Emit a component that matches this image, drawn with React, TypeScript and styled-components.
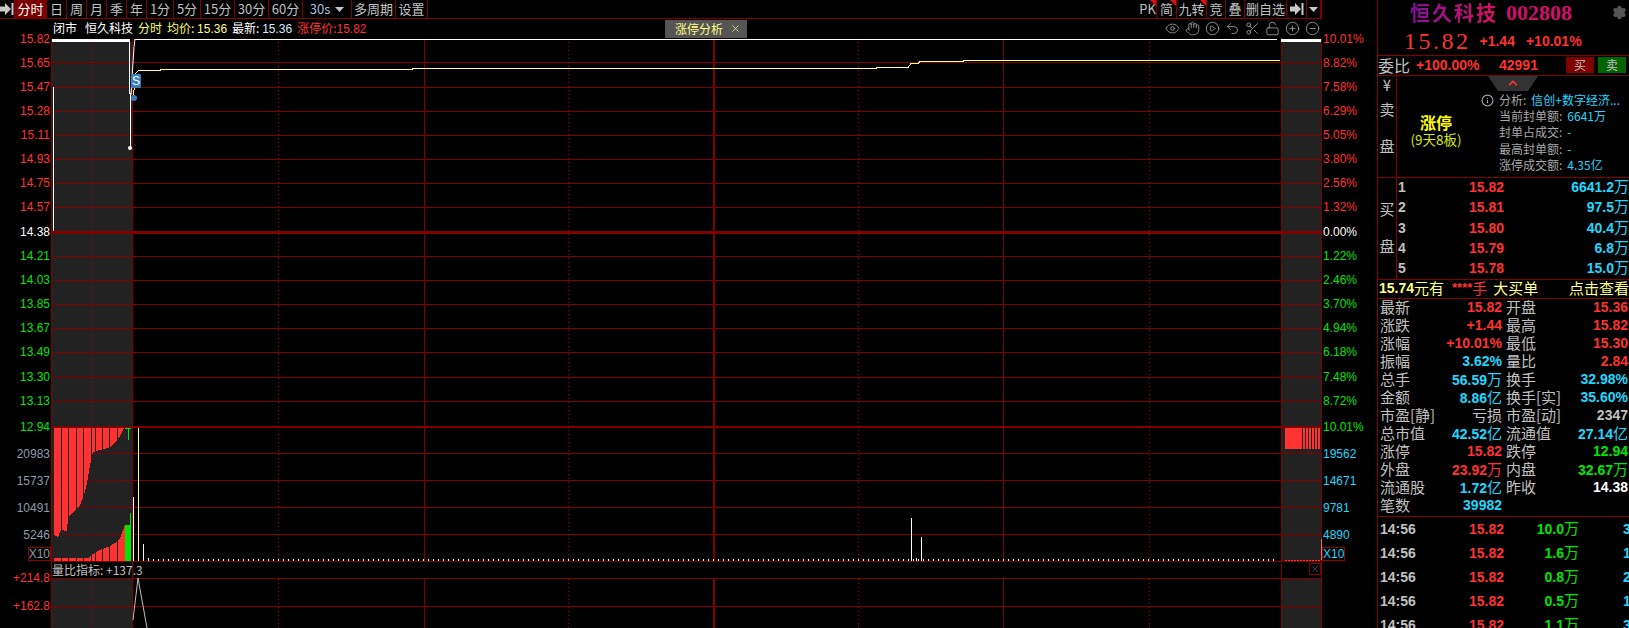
import React from 'react';
import styled, { createGlobalStyle } from 'styled-components';
import { Eye, Hand, CirclePlay, Undo2, Scissors, LockOpen, CirclePlus, CircleMinus, Settings, Info, ChevronUp, X } from 'lucide-react';

const SANS = '"Liberation Sans", "Noto Sans CJK SC", sans-serif';
const CJK = '"Noto Sans CJK SC", "Liberation Sans", sans-serif';
const LINE = '#800000';
const RED = '#ff3232';
const GREEN = '#00e600';
const CYAN = '#1ed8ff';
const GRAY = '#c0c0c0';

const GlobalStyle = createGlobalStyle`
  html, body {
    margin: 0;
    padding: 0;
    background: #000;
    overflow: hidden;
  }
`;

const Page = styled.div`
  display: flex;
  width: 1629px;
  height: 628px;
  overflow: hidden;
  background: #000;
  font-family: ${SANS};
`;

const Main = styled.div`
  width: 1377px;
  flex-shrink: 0;
  display: flex;
  flex-direction: column;
`;

const Toolbar = styled.div`
  display: flex;
  width: 1322px;
  height: 19px;
  flex-shrink: 0;
  box-sizing: border-box;
  border-bottom: 1px solid ${LINE};
  border-right: 1px solid ${LINE};
`;

const ToolCell = styled.div<{ $w: number; $active?: boolean; $flag?: boolean; $color?: string }>`
  position: relative;
  width: ${(p) => p.$w}px;
  box-sizing: border-box;
  display: flex;
  align-items: center;
  justify-content: center;
  gap: 5px;
  border-right: 1px solid ${LINE};
  background: ${(p) => (p.$active ? '#7a0000' : 'transparent')};
  color: ${(p) => (p.$active ? '#fff' : p.$color || GRAY)};
  font: 13px/18px ${CJK};
  white-space: nowrap;
  ${(p) =>
    p.$flag &&
    `&::after {
      content: '';
      position: absolute;
      top: 0;
      right: 0;
      border-top: 6px solid #e01010;
      border-left: 6px solid transparent;
    }`}
`;

const ToolSpacer = styled.div`
  flex: 1;
`;

const ChartBody = styled.div`
  flex: 1;
  display: flex;
  min-height: 0;
`;

const AxisColumn = styled.div<{ $side: 'left' | 'right' }>`
  width: ${(p) => (p.$side === 'left' ? 51 : 55)}px;
  flex-shrink: 0;
  box-sizing: border-box;
  display: flex;
  flex-direction: column;
  align-items: ${(p) => (p.$side === 'left' ? 'flex-end' : 'flex-start')};
  padding-top: 14px;
  padding-right: ${(p) => (p.$side === 'left' ? 1 : 0)}px;
  padding-left: ${(p) => (p.$side === 'left' ? 0 : 1)}px;
  font-size: 12px;
  line-height: 12px;
`;

const AxisTick = styled.div<{ $gap: number; $color: string; $boxed?: boolean }>`
  height: 12px;
  flex-shrink: 0;
  margin-top: ${(p) => p.$gap}px;
  color: ${(p) => p.$color};
  white-space: nowrap;
  ${(p) => p.$boxed && `outline: 1px solid #900000; background: #000;`}
`;

const Center = styled.div`
  width: 1271px;
  flex-shrink: 0;
  display: flex;
  flex-direction: column;
`;

const InfoRow = styled.div`
  height: 19px;
  flex-shrink: 0;
  display: flex;
  align-items: center;
`;

const InfoLeft = styled.div`
  width: 614px;
  box-sizing: border-box;
  padding-left: 2px;
  display: flex;
  gap: 5px;
  font: 12px/19px ${CJK};
  white-space: nowrap;
`;

const InfoText = styled.span<{ $color: string; $wide?: boolean }>`
  color: ${(p) => p.$color};
  margin-right: ${(p) => (p.$wide ? 3 : 0)}px;
`;

const InfoNum = styled.span<{ $color: string }>`
  color: ${(p) => p.$color};
  font-family: ${SANS};
`;

const AnalysisTag = styled.div`
  width: 82px;
  height: 18px;
  box-sizing: border-box;
  padding: 0 6px 0 10px;
  background: #555;
  color: #ffff80;
  font: 12px/18px ${CJK};
  display: flex;
  align-items: center;
  justify-content: space-between;
`;

const ToolIcons = styled.div`
  margin-left: auto;
  margin-right: 2px;
  display: flex;
  gap: 5px;
  color: #9a9a9a;
`;

const PlotWrap = styled.div`
  position: relative;
  flex: 1;
  min-height: 0;
`;

const PlotSvg = styled.svg`
  display: block;
  width: 1271px;
  height: 590px;
`;

const IndicatorLabel = styled.div`
  position: absolute;
  left: 1px;
  top: 524px;
  height: 15px;
  color: ${GRAY};
  font: 12px/15px ${CJK};
  white-space: nowrap;
`;

const IndicatorClose = styled.div`
  position: absolute;
  right: 1px;
  top: 525px;
  width: 12px;
  height: 12px;
  box-sizing: border-box;
  border: 1px solid ${LINE};
  color: #999;
  display: flex;
  align-items: center;
  justify-content: center;
`;

const Side = styled.div`
  width: 252px;
  flex-shrink: 0;
  box-sizing: border-box;
  border-left: 1px solid ${LINE};
  display: flex;
  flex-direction: column;
  overflow: hidden;
`;

const TitleRow = styled.div`
  position: relative;
  height: 26px;
  flex-shrink: 0;
  box-sizing: border-box;
  padding-left: 32px;
  display: flex;
  align-items: center;
  gap: 8px;
`;

const TitleName = styled.span`
  font: 700 20px/24px ${CJK};
  letter-spacing: 2px;
  background: linear-gradient(90deg, #80109a, #e01060);
  -webkit-background-clip: text;
  background-clip: text;
  color: transparent;
`;

const TitleCode = styled.span`
  font: 700 22px/24px "Liberation Serif", serif;
  color: #d0106a;
`;

const GearSlot = styled.div`
  position: absolute;
  right: 2px;
  top: 5px;
  color: #555;
`;

const PriceRow = styled.div`
  height: 30px;
  flex-shrink: 0;
  box-sizing: border-box;
  padding-left: 26px;
  display: flex;
  align-items: center;
  color: ${RED};
  border-bottom: 1px solid ${LINE};
`;

const BigPrice = styled.span`
  font: 24px/26px "Liberation Serif", serif;
  letter-spacing: 2.5px;
  margin-right: 9px;
`;

const PriceDelta = styled.span`
  font: 700 14px/26px ${SANS};
  margin-right: 11px;
`;

const RatioRow = styled.div`
  height: 20px;
  flex-shrink: 0;
  box-sizing: border-box;
  padding-bottom: 1px;
  display: flex;
  align-items: center;
  border-bottom: 1px solid ${LINE};
  color: ${RED};
  font: 700 14px/18px ${SANS};
`;

const RatioLabel = styled.span`
  width: 38px;
  color: ${GRAY};
  font: 400 16px/18px ${CJK};
  white-space: nowrap;
`;

const RatioValue = styled.span`
  width: 83px;
`;

const TradeButton = styled.div<{ $bg: string }>`
  width: 28px;
  height: 16px;
  margin-left: 4px;
  background: ${(p) => p.$bg};
  color: ${GRAY};
  font: 400 12px/16px ${CJK};
  text-align: center;
`;

const RatioButtons = styled.div`
  display: flex;
  margin-left: auto;
  margin-right: 3px;
`;

const BookSection = styled.div<{ $h: number }>`
  position: relative;
  height: ${(p) => p.$h}px;
  flex-shrink: 0;
  box-sizing: border-box;
  display: flex;
  border-bottom: 1px solid ${LINE};
`;

const BookSideLabel = styled.div<{ $top: number; $gap: number }>`
  width: 19px;
  flex-shrink: 0;
  box-sizing: border-box;
  border-right: 1px solid ${LINE};
  padding-top: ${(p) => p.$top}px;
  display: flex;
  flex-direction: column;
  align-items: center;
  gap: ${(p) => p.$gap}px;
  color: ${GRAY};
  font: 15px/18px ${CJK};
`;

const BookSideGap = styled.div`
  height: 7px;
  flex-shrink: 0;
`;

const Notch = styled.div`
  position: absolute;
  left: 110px;
  top: 0;
  width: 50px;
  height: 15px;
  background: #333;
  clip-path: polygon(0 0, 100% 0, 80% 100%, 20% 100%);
  color: ${RED};
  display: flex;
  justify-content: center;
`;

const LimitBadge = styled.div`
  width: 78px;
  flex-shrink: 0;
  padding-top: 37px;
  text-align: center;
  white-space: nowrap;
`;

const LimitTitle = styled.div`
  color: #ffff00;
  font: 700 16px/18px ${CJK};
`;

const LimitSub = styled.div`
  color: #d8e800;
  font: 13.5px/16px ${CJK};
`;

const LimitList = styled.div`
  margin-left: 6px;
  padding-top: 16px;
  display: flex;
  flex-direction: column;
`;

const LimitRow = styled.div<{ $indent?: boolean }>`
  height: 16.2px;
  display: flex;
  align-items: center;
  gap: 5px;
  padding-left: ${(p) => (p.$indent ? 18 : 0)}px;
  color: #a8a8a8;
  font: 12px/16px ${CJK};
  white-space: nowrap;
`;

const LimitValue = styled.span`
  color: ${CYAN};
`;

const BookRows = styled.div`
  flex: 1;
  display: flex;
  flex-direction: column;
`;

const BookRow = styled.div`
  flex: 1;
  box-sizing: border-box;
  padding-bottom: 2px;
  display: grid;
  grid-template-columns: 20px 87px 1fr;
  align-items: center;
  font: 700 14px/18px ${SANS};
`;

const BookIndex = styled.span`
  color: ${GRAY};
  padding-left: 1px;
`;

const Cell = styled.span<{ $color: string }>`
  color: ${(p) => p.$color};
  text-align: right;
  white-space: nowrap;
`;

const Unit = styled.span`
  font: 400 15px/16px ${CJK};
`;

const AdRow = styled.div`
  height: 19px;
  flex-shrink: 0;
  box-sizing: border-box;
  padding-left: 1px;
  padding-bottom: 2px;
  display: flex;
  align-items: center;
  border-bottom: 1px solid ${LINE};
  color: #ffff80;
  font: 15px/16px ${CJK};
  white-space: nowrap;
`;

const AdPrice = styled.span`
  font: 700 14px/16px ${SANS};
`;

const AdStars = styled.span`
  margin-left: 8px;
  color: ${RED};
  font-weight: 700;
  font-family: ${SANS};
  font-size: 13px;
`;

const AdHint = styled.span`
  margin-left: auto;
`;

const AdWord = styled.span<{ $red?: boolean; $gap?: number }>`
  color: ${(p) => (p.$red ? RED : 'inherit')};
  margin-left: ${(p) => p.$gap || 0}px;
`;

const StatsGrid = styled.div`
  height: 218px;
  flex-shrink: 0;
  box-sizing: border-box;
  border-bottom: 1px solid ${LINE};
  display: grid;
  grid-template-columns: 124px 122px;
  grid-auto-rows: 18px;
  column-gap: 4px;
  align-content: start;
`;

const StatCell = styled.div`
  box-sizing: border-box;
  padding-bottom: 2px;
  display: flex;
  justify-content: space-between;
  align-items: center;
  white-space: nowrap;
  font: 700 14px/16px ${SANS};
`;

const StatLabel = styled.span`
  padding-left: 2px;
  color: ${GRAY};
  font: 400 15px/16px ${CJK};
`;

const StatSecondLabel = styled(StatLabel)`
  padding-left: 0;
`;

const TradeRow = styled.div`
  height: 24px;
  flex-shrink: 0;
  display: grid;
  grid-template-columns: 50px 76px 75px 44px 6px;
  align-items: center;
  font: 700 14px/24px ${SANS};
`;

const TradeTime = styled.span`
  color: ${GRAY};
  padding-left: 2px;
`;

const TradeTail = styled.span`
  color: ${CYAN};
`;

// 数字和单位分开渲染，单位用细字体
const Val = ({ text, color }: { text: string; color: string }) => {
  const m = text.match(/^(.*?)([万亿]?)$/);
  return (
    <Cell $color={color}>
      {m ? m[1] : text}
      {m && m[2] ? <Unit>{m[2]}</Unit> : null}
    </Cell>
  );
};

type Tick = { y: number; text: string; color: string; boxed?: boolean };

const P = '#ff3232';
const V = '#8f9ba8';

const leftTicks: Tick[] = [
  { y: 39, text: '15.82', color: P },
  { y: 62.5, text: '15.65', color: P },
  { y: 87, text: '15.47', color: P },
  { y: 111, text: '15.28', color: P },
  { y: 135, text: '15.11', color: P },
  { y: 159, text: '14.93', color: P },
  { y: 183, text: '14.75', color: P },
  { y: 207, text: '14.57', color: P },
  { y: 232, text: '14.38', color: '#fff' },
  { y: 256, text: '14.21', color: GREEN },
  { y: 280, text: '14.03', color: GREEN },
  { y: 304, text: '13.85', color: GREEN },
  { y: 328, text: '13.67', color: GREEN },
  { y: 352, text: '13.49', color: GREEN },
  { y: 377, text: '13.30', color: GREEN },
  { y: 401, text: '13.13', color: GREEN },
  { y: 427, text: '12.94', color: GREEN },
  { y: 453.5, text: '20983', color: V },
  { y: 480.5, text: '15737', color: V },
  { y: 507.5, text: '10491', color: V },
  { y: 534.5, text: '5246', color: V },
  { y: 553.5, text: 'X10', color: V, boxed: true },
  { y: 578, text: '+214.8', color: P },
  { y: 606, text: '+162.8', color: P },
];

const rightTicks: Tick[] = [
  { y: 39, text: '10.01%', color: P },
  { y: 62.5, text: '8.82%', color: P },
  { y: 87, text: '7.58%', color: P },
  { y: 111, text: '6.29%', color: P },
  { y: 135, text: '5.05%', color: P },
  { y: 159, text: '3.80%', color: P },
  { y: 183, text: '2.56%', color: P },
  { y: 207, text: '1.32%', color: P },
  { y: 232, text: '0.00%', color: '#fff' },
  { y: 256, text: '1.22%', color: GREEN },
  { y: 280, text: '2.46%', color: GREEN },
  { y: 304, text: '3.70%', color: GREEN },
  { y: 328, text: '4.94%', color: GREEN },
  { y: 352, text: '6.18%', color: GREEN },
  { y: 377, text: '7.48%', color: GREEN },
  { y: 401, text: '8.72%', color: GREEN },
  { y: 427, text: '10.01%', color: GREEN },
  { y: 453.5, text: '19562', color: CYAN },
  { y: 480.5, text: '14671', color: CYAN },
  { y: 507.5, text: '9781', color: CYAN },
  { y: 534.5, text: '4890', color: CYAN },
  { y: 553.5, text: 'X10', color: CYAN, boxed: true },
];

const AxisTicks = ({ ticks, side }: { ticks: Tick[]; side: 'left' | 'right' }) => (
  <AxisColumn $side={side}>
    {ticks.map((t, i) => (
      <AxisTick key={t.text + i} $color={t.color} $boxed={t.boxed} $gap={i === 0 ? 0 : t.y - ticks[i - 1].y - 12}>
        {t.text}
      </AxisTick>
    ))}
  </AxisColumn>
);

const gridY = [62.5, 87, 111, 135, 159, 183, 207, 256, 280, 304, 328, 352, 377, 401, 453.5, 480.5, 507.5, 534.5, 561.5, 578.5, 606.5];
const dotted = [91, 278, 568, 858, 1149];
const solid = [424, 1003];

const hang = '54,428 54,535 58,537 61,530 67,531 68,517 75,510 80,505 84,495 87,483 90,465 93,452 100,450 105,449 110,447 115,443 120,436 124,428';
const rise = '54,561 54,558 88,558 90,556 95,553 100,550 105,548 110,546 115,543 120,538 125,525 125,561';
const slits = [61, 68, 76, 83, 91, 95, 102, 109, 117];

const ticksX = Array.from({ length: 225 }, (_, i) => 153 + i * 5);
const rightStripes = Array.from({ length: 12 }, (_, i) => 1285 + i * 3);

const Plot = () => (
  <PlotSvg viewBox="51 38 1271 590">
    <g shapeRendering="crispEdges">
      <rect x="52" y="42" width="80" height="520" fill="#222" />
      <rect x="52" y="579" width="80" height="49" fill="#222" />
      <rect x="1281" y="42" width="41" height="520" fill="#222" />
      <rect x="1281" y="579" width="41" height="49" fill="#222" />
      {gridY.map((y) => (
        <line key={y} x1="51" x2="1322" y1={y} y2={y} stroke={LINE} />
      ))}
      <rect x="51" y="231" width="1271" height="3" fill={LINE} />
      <rect x="51" y="426" width="1271" height="2" fill={LINE} />
      {dotted.map((x) => (
        <g key={x}>
          <line x1={x + 0.5} x2={x + 0.5} y1="42" y2="561" stroke="#a00000" strokeDasharray="1 3" />
          <line x1={x + 0.5} x2={x + 0.5} y1="579" y2="628" stroke="#a00000" strokeDasharray="1 3" />
        </g>
      ))}
      {solid.map((x) => (
        <g key={x}>
          <line x1={x + 0.5} x2={x + 0.5} y1="39" y2="561" stroke={LINE} />
          <line x1={x + 0.5} x2={x + 0.5} y1="579" y2="628" stroke={LINE} />
        </g>
      ))}
      <rect x="713" y="39" width="2" height="522" fill={LINE} />
      <rect x="713" y="579" width="2" height="49" fill={LINE} />
      {[51, 131.5, 1280.5, 1321].map((x) => (
        <line key={x} x1={x + 0.5} x2={x + 0.5} y1="38" y2="628" stroke={LINE} />
      ))}

      <rect x="52" y="39" width="78" height="3" fill="#fff" />
      <rect x="1281" y="39" width="40" height="3" fill="#fff" />
      <rect x="135" y="39" width="1142" height="1" fill="#fff" />
      <rect x="53" y="87" width="1" height="144" fill="#fff" />
      <rect x="129" y="41" width="1" height="53" fill="#fff" />
      <rect x="130" y="93" width="1" height="55" fill="#fff" />
    </g>

    <circle cx="130" cy="148" r="2" fill="#fff" />
    <polyline points="131,95 133,62 134,47 135,39" fill="none" stroke="#fff" />
    <polyline
      points="133,96 135,85 136,73 138,71 140,70.5 160,70.5 160,69.5 412,69.5 412,68.5 876,68.5 876,67.5 908,67.5 911,63.5 918,63.5 920,61.5 963,61.5 963,60.5 1280,60.5"
      fill="none"
      stroke="#ffff80"
      shapeRendering="crispEdges"
    />
    <rect x="131" y="74" width="10" height="14" rx="1" fill="#3a7cc0" />
    <text x="132" y="85" fill="#fff" fontSize="12" fontFamily='"Liberation Sans", sans-serif'>
      S
    </text>
    <circle cx="134" cy="98" r="3" fill="#3a7cc0" />

    <g shapeRendering="crispEdges">
      <polygon points={hang} fill="#ff3232" />
      <polygon points={rise} fill="#ff3232" />
      {slits.map((x) => (
        <rect key={x} x={x} y="428" width="1" height="133" fill="#222" />
      ))}
      <rect x="125" y="525" width="5" height="36" fill="#00e600" />
      <rect x="130" y="513" width="1" height="48" fill="#00e600" />
      <rect x="125" y="428" width="6" height="1" fill="#00e600" />
      <rect x="128" y="428" width="1" height="12" fill="#00e600" />
      <rect x="133" y="497" width="1" height="64" fill="#fff" />
      <rect x="138" y="428" width="1" height="133" fill="#ffff80" />
      <rect x="143" y="544" width="1" height="17" fill="#ffff80" />
      <rect x="148" y="558" width="1" height="3" fill="#fff" />
      {ticksX.map((x) => (
        <rect key={x} x={x} y="559" width="1" height="2" fill="#fff" />
      ))}
      <rect x="911" y="518" width="1" height="43" fill="#fff" />
      <rect x="921" y="537" width="1" height="24" fill="#fff" />
      <rect x="916" y="558" width="1" height="3" fill="#fff" />
      {rightStripes.map((x, i) => (
        <rect key={x} x={x} y="428" width={i < 5 ? 3 : 2} height="21" fill="#ff3232" />
      ))}
      <line x1="1285" x2="1320" y1="560.5" y2="560.5" stroke="#ff3232" strokeDasharray="2 1" />
      <rect x="1321" y="539" width="1" height="21" fill="#ff6060" />
    </g>

    <polyline points="133,620 138,578 147,628" fill="none" stroke="#c0c0c0" />
  </PlotSvg>
);

const statRows: [string, string, string, string, string, string][] = [
  ['最新', '15.82', RED, '开盘', '15.36', RED],
  ['涨跌', '+1.44', RED, '最高', '15.82', RED],
  ['涨幅', '+10.01%', RED, '最低', '15.30', RED],
  ['振幅', '3.62%', CYAN, '量比', '2.84', RED],
  ['总手', '56.59万', CYAN, '换手', '32.98%', CYAN],
  ['金额', '8.86亿', CYAN, '换手[实]', '35.60%', CYAN],
  ['市盈[静]', '亏损', GRAY, '市盈[动]', '2347', GRAY],
  ['总市值', '42.52亿', CYAN, '流通值', '27.14亿', CYAN],
  ['涨停', '15.82', RED, '跌停', '12.94', GREEN],
  ['外盘', '23.92万', RED, '内盘', '32.67万', GREEN],
  ['流通股', '1.72亿', CYAN, '昨收', '14.38', '#fff'],
  ['笔数', '39982', CYAN, '', '', GRAY],
];

const bookRows = [
  ['1', '15.82', '6641.2万'],
  ['2', '15.81', '97.5万'],
  ['3', '15.80', '40.4万'],
  ['4', '15.79', '6.8万'],
  ['5', '15.78', '15.0万'],
];

const trades = [
  ['14:56', '15.82', '10.0万', '3'],
  ['14:56', '15.82', '1.6万', '1'],
  ['14:56', '15.82', '0.8万', '2'],
  ['14:56', '15.82', '0.5万', '1'],
  ['14:56', '15.82', '1.1万', '3'],
];

const leftTools: [string, number][] = [
  ['日', 20], ['周', 20], ['月', 20], ['季', 20], ['年', 20],
  ['1分', 27], ['5分', 27], ['15分', 34], ['30分', 34], ['60分', 34],
];

const ArrowEnd = () => (
  <svg width="14" height="12" viewBox="0 0 14 12">
    <path d="M0 3.5h5V0l6 6-6 6V8.5H0z M11.5 0h2v12h-2z" fill="#c8c8c8" />
  </svg>
);

const Caret = () => (
  <svg width="9" height="5" viewBox="0 0 9 5">
    <path d="M0 0h9L4.5 5z" fill="#c8c8c8" />
  </svg>
);

export default function App() {
  return (
    <Page>
      <GlobalStyle />
      <Main>
        <Toolbar>
          <ToolCell $w={15}>
            <ArrowEnd />
          </ToolCell>
          <ToolCell $w={32} $active>
            分时
          </ToolCell>
          {leftTools.map(([t, w]) => (
            <ToolCell key={t} $w={w}>
              {t}
            </ToolCell>
          ))}
          <ToolCell $w={49} $color="#a8c0d8">
            30s
            <Caret />
          </ToolCell>
          <ToolCell $w={44}>多周期</ToolCell>
          <ToolCell $w={32}>设置</ToolCell>
          <ToolSpacer />
          <ToolCell $w={18} $flag>
            PK
          </ToolCell>
          <ToolCell $w={20} $flag>
            简
          </ToolCell>
          <ToolCell $w={30} $flag>
            九转
          </ToolCell>
          <ToolCell $w={19}>竞</ToolCell>
          <ToolCell $w={19}>叠</ToolCell>
          <ToolCell $w={42}>删自选</ToolCell>
          <ToolCell $w={20}>
            <ArrowEnd />
          </ToolCell>
          <ToolCell $w={14}>
            <Caret />
          </ToolCell>
        </Toolbar>
        <ChartBody>
          <AxisTicks ticks={leftTicks} side="left" />
          <Center>
            <InfoRow>
              <InfoLeft>
                <InfoText $color="#fff" $wide>闭市</InfoText>
                <InfoText $color="#fff">恒久科技</InfoText>
                <InfoText $color="#ffff66">分时</InfoText>
                <InfoText $color="#ffff66">
                  均价: <InfoNum $color="#ffff80">15.36</InfoNum>
                </InfoText>
                <InfoText $color="#fff">
                  最新: <InfoNum $color="#d8ecff">15.36</InfoNum>
                </InfoText>
                <InfoText $color={RED}>
                  涨停价:<InfoNum $color={RED}>15.82</InfoNum>
                </InfoText>
              </InfoLeft>
              <AnalysisTag>
                涨停分析
                <X size={11} strokeWidth={1.5} />
              </AnalysisTag>
              <ToolIcons>
                <Eye size={15} strokeWidth={1.4} />
                <Hand size={15} strokeWidth={1.4} />
                <CirclePlay size={15} strokeWidth={1.4} />
                <Undo2 size={15} strokeWidth={1.4} />
                <Scissors size={15} strokeWidth={1.4} />
                <LockOpen size={15} strokeWidth={1.4} />
                <CirclePlus size={15} strokeWidth={1.4} />
                <CircleMinus size={15} strokeWidth={1.4} />
              </ToolIcons>
            </InfoRow>
            <PlotWrap>
              <Plot />
              <IndicatorLabel>量比指标: +137.3</IndicatorLabel>
              <IndicatorClose>
                <X size={10} strokeWidth={1} />
              </IndicatorClose>
            </PlotWrap>
          </Center>
          <AxisTicks ticks={rightTicks} side="right" />
        </ChartBody>
      </Main>
      <Side>
        <TitleRow>
          <TitleName>恒久科技</TitleName>
          <TitleCode>002808</TitleCode>
          <GearSlot>
            <Settings size={15} fill="#555" />
          </GearSlot>
        </TitleRow>
        <PriceRow>
          <BigPrice>15.82</BigPrice>
          <PriceDelta>+1.44</PriceDelta>
          <PriceDelta>+10.01%</PriceDelta>
        </PriceRow>
        <RatioRow>
          <RatioLabel>委比</RatioLabel>
          <RatioValue>+100.00%</RatioValue>
          <span>42991</span>
          <RatioButtons>
            <TradeButton $bg="#800000">买</TradeButton>
            <TradeButton $bg="#006400">卖</TradeButton>
          </RatioButtons>
        </RatioRow>
        <BookSection $h={102}>
          <BookSideLabel $top={0} $gap={6}>
            <span>¥</span>
            <span>卖</span>
            <BookSideGap />
            <span>盘</span>
          </BookSideLabel>
          <Notch>
            <ChevronUp size={14} strokeWidth={3} />
          </Notch>
          <LimitBadge>
            <LimitTitle>涨停</LimitTitle>
            <LimitSub>(9天8板)</LimitSub>
          </LimitBadge>
          <LimitList>
            <LimitRow>
              <Info size={13} color="#aaa" />
              分析:
              <LimitValue>信创+数字经济...</LimitValue>
            </LimitRow>
            <LimitRow $indent>
              当前封单额:<LimitValue>6641万</LimitValue>
            </LimitRow>
            <LimitRow $indent>
              封单占成交:<LimitValue>-</LimitValue>
            </LimitRow>
            <LimitRow $indent>
              最高封单额:<LimitValue>-</LimitValue>
            </LimitRow>
            <LimitRow $indent>
              涨停成交额:<LimitValue>4.35亿</LimitValue>
            </LimitRow>
          </LimitList>
        </BookSection>
        <BookSection $h={102}>
          <BookSideLabel $top={22} $gap={19}>
            <span>买</span>
            <span>盘</span>
          </BookSideLabel>
          <BookRows>
            {bookRows.map(([i, price, vol]) => (
              <BookRow key={i}>
                <BookIndex>{i}</BookIndex>
                <Val text={price} color={RED} />
                <Val text={vol} color={CYAN} />
              </BookRow>
            ))}
          </BookRows>
        </BookSection>
        <AdRow>
          <AdPrice>15.74</AdPrice>元有
          <AdStars>****</AdStars>
          <AdWord $red>手</AdWord>
          <AdWord $gap={6}>大买单</AdWord>
          <AdHint>点击查看</AdHint>
        </AdRow>
        <StatsGrid>
          {statRows.map((r) => (
            <React.Fragment key={r[0]}>
              <StatCell>
                <StatLabel>{r[0]}</StatLabel>
                {r[1] === '亏损' ? <StatSecondLabel>{r[1]}</StatSecondLabel> : <Val text={r[1]} color={r[2]} />}
              </StatCell>
              <StatCell>
                <StatSecondLabel>{r[3]}</StatSecondLabel>
                <Val text={r[4]} color={r[5]} />
              </StatCell>
            </React.Fragment>
          ))}
        </StatsGrid>
        {trades.map((t, i) => (
          <TradeRow key={i}>
            <TradeTime>{t[0]}</TradeTime>
            <Val text={t[1]} color={RED} />
            <Val text={t[2]} color={GREEN} />
            <span />
            <TradeTail>{t[3]}</TradeTail>
          </TradeRow>
        ))}
      </Side>
    </Page>
  );
}
